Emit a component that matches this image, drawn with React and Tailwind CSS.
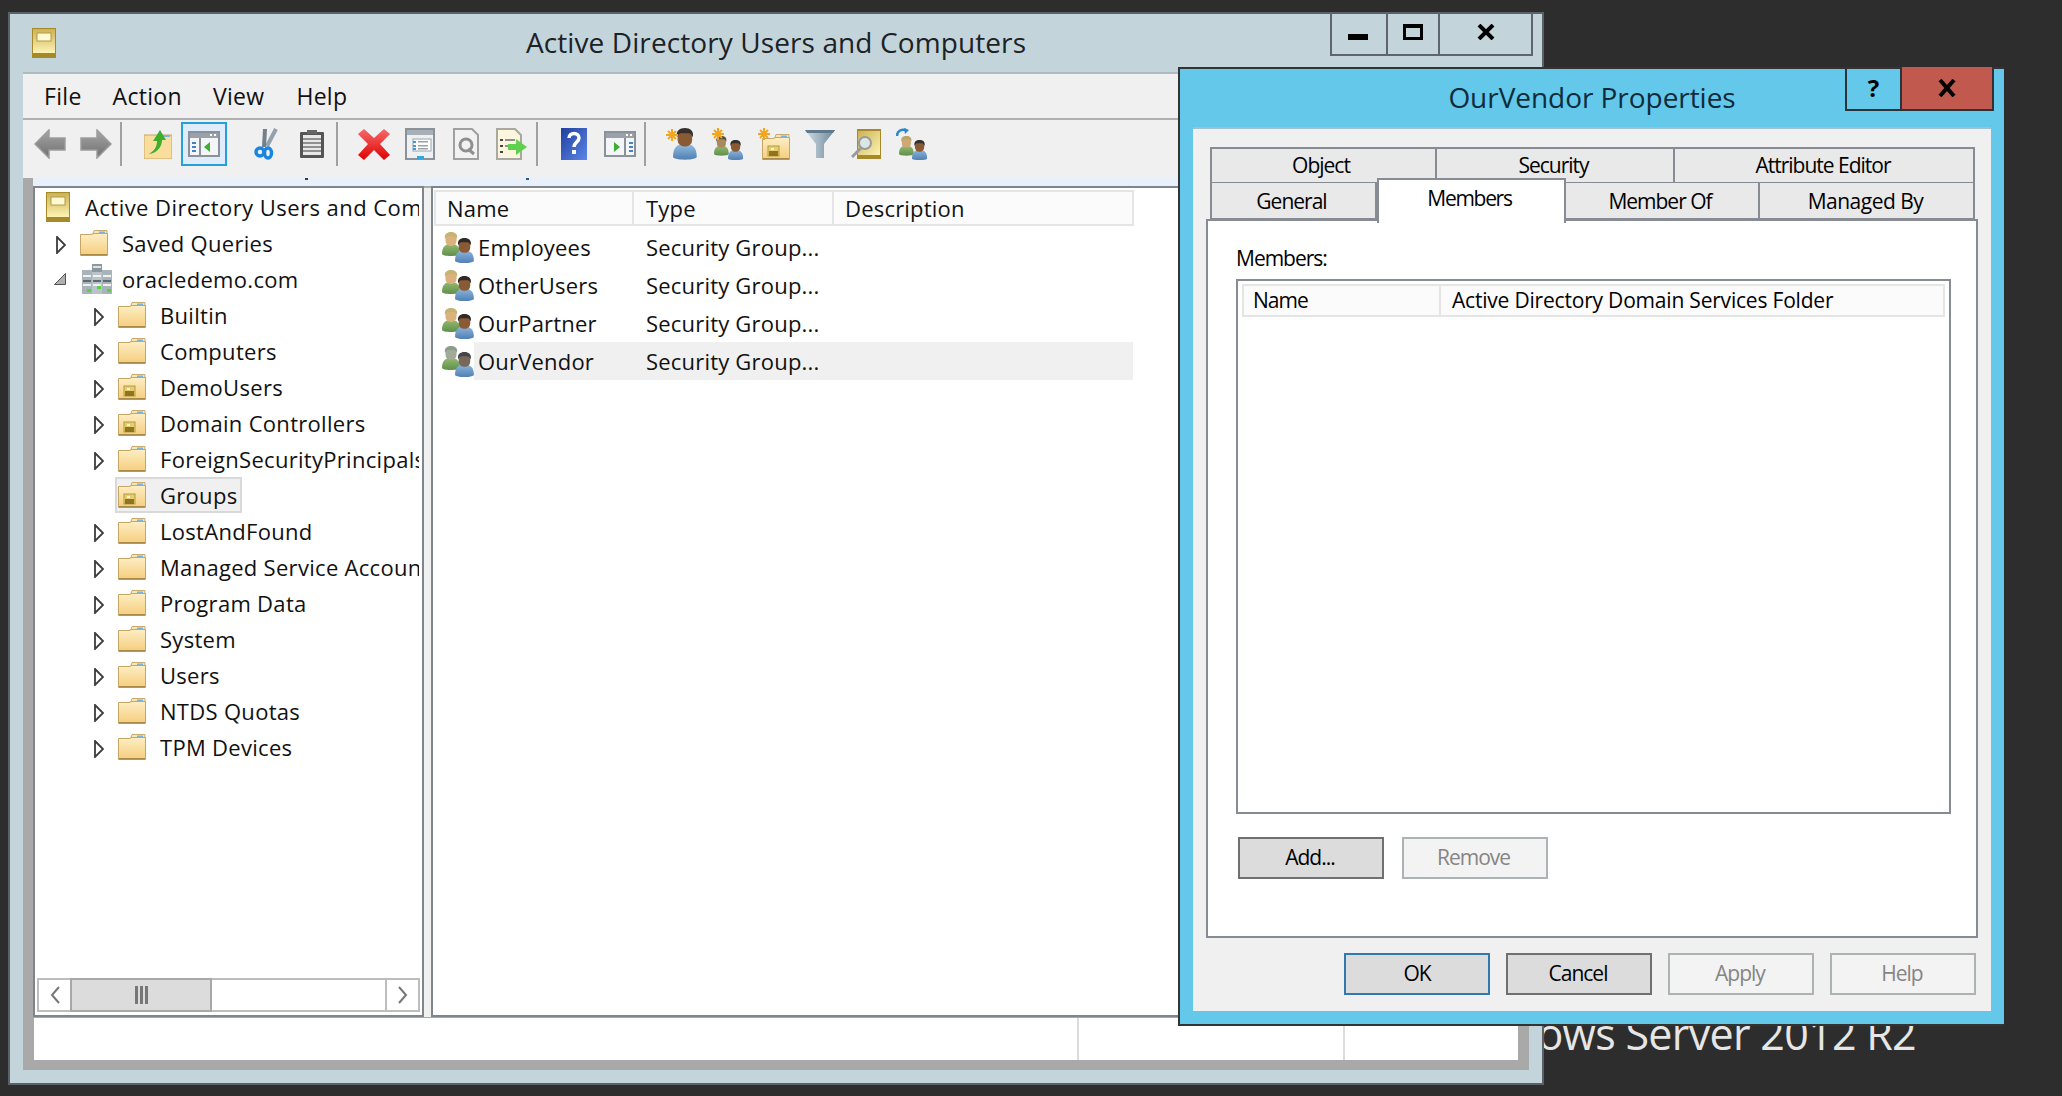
import React from "react";

const Grad = ({ id, c1, c2, x2 = 0, y2 = 1 }) => (
  <linearGradient id={id} x1="0" y1="0" x2={x2} y2={y2}>
    <stop offset="0" stopColor={c1} />
    <stop offset="1" stopColor={c2} />
  </linearGradient>
);

const Folder = ({ badge }) => (
  <svg width="28" height="26" viewBox="0 0 28 26" className="shrink-0 block">
    <defs><Grad id="fold" c1="#fdeec4" c2="#f5cd7c" /></defs>
    <path d="M14 .5h13v6H12z" fill="#f8e5b6" stroke="#c9ab6c" />
    <rect x="19" y="1.5" width="6" height="2" fill="#7cb3e0" />
    <path d="M.5 4.5H11l3-1H27.500V25.500H.5z" fill="url(#fold)" stroke="#c6a665" />
    <rect x="1" y="24" width="26" height="1.500" fill="#a98a48" />
    {badge && (
      <>
        <rect x="6" y="12" width="11" height="10" fill="#e8cd6e" stroke="#b39a42" />
        <rect x="7" y="17" width="9" height="5" fill="#8f7420" />
        <rect x="9" y="14" width="3" height="2" fill="#fff6c9" />
      </>
    )}
  </svg>
);

const SnapIn = () => (
  <svg width="24" height="30" viewBox="0 0 24 30" className="shrink-0 block">
    <defs><Grad id="snap" c1="#cbb255" c2="#fdf3b4" /></defs>
    <rect x="0" y="0" width="24" height="30" fill="#a8892a" />
    <rect x="1" y="1" width="22" height="24" fill="url(#snap)" />
    <rect x="1" y="25" width="22" height="4" fill="#a8892a" />
    <rect x="5" y="5" width="14" height="8" fill="#fff9d4" stroke="#b49a42" />
  </svg>
);

const Domain = () => (
  <svg width="30" height="30" viewBox="0 0 30 30" className="shrink-0 block">
    <rect x="10" y="0" width="10" height="26" fill="#8c98a0" />
    <rect x="0" y="6" width="10" height="24" fill="#a8b3ba" />
    <rect x="10" y="8" width="10" height="22" fill="#b9c3c9" />
    <rect x="20" y="6" width="10" height="24" fill="#a8b3ba" />
    {[0, 10, 20].map((x) => (
      <g key={x}>
        <rect x={x + 1} y="11" width="8" height="2" fill="#eef2f4" />
        <rect x={x + 1} y="16" width="8" height="2" fill="#5e6a72" />
        <rect x={x + 1} y="20" width="8" height="2" fill="#eef2f4" />
        <rect x={x + 5} y={x === 10 ? 22 : 25} width="4" height="3" fill="#57d43a" />
      </g>
    ))}
    <rect x="11" y="2" width="8" height="2" fill="#dde3e6" />
  </svg>
);

const Arrow = ({ open }) =>
  open ? (
    <svg width="12" height="12" viewBox="0 0 12 12" className="block">
      <path d="M11.500 .5v11H.5z" fill="#b0b0b0" stroke="#555" />
    </svg>
  ) : (
    <svg width="10" height="18" viewBox="0 0 10 18" className="block mt-[3px]">
      <path d="M1 1l8 8-8 8z" fill="#fff" stroke="#3c3c3c" strokeWidth="1.800" />
    </svg>
  );

const Person = ({ x = 0, y = 0, s = 1, body = "#7fa9d2", face = "#8a5a34", hair = "#35302c", id }) => (
  <g transform={`translate(${x} ${y}) scale(${s})`}>
    <defs><Grad id={id} c1={body} c2="#4f7fb2" /></defs>
    <path d="M0 22c0-7 3-10 9-10s9 3 9 10c0 1-4 2-9 2s-9-1-9-2z" fill={`url(#${id})`} />
    <rect x="3.500" y="1" width="11" height="13" rx="5" fill={face} />
    <path d="M3 7c-1-5 2-7 6-7s7 2 6 7c-1-2-2-3-3-3H6C5 4 4 5 3 7z" fill={hair} />
  </g>
);

const GreenPerson = ({ x, y, s, face, hair, id }) => (
  <g transform={`translate(${x} ${y}) scale(${s})`}>
    <defs><Grad id={id} c1="#93b96f" c2="#5f8f4b" /></defs>
    <path d="M0 22c0-7 3-10 9-10s9 3 9 10c0 1-4 2-9 2s-9-1-9-2z" fill={`url(#${id})`} />
    <rect x="3.500" y="1" width="11" height="13" rx="5" fill={face} />
    <path d="M3 7c-1-5 2-7 6-7s7 2 6 7c-1-2-2-3-3-3H6C5 4 4 5 3 7z" fill={hair} />
  </g>
);

const Group = ({ dim, size = 32 }) => (
  <svg width={size} height={size} viewBox="0 0 32 32" className="shrink-0 block">
    <GreenPerson x={0} y={1} s={1} face={dim ? "#a2aa98" : "#d9b27e"} hair={dim ? "#8d9c8d" : "#c8b272"} id={dim ? "gd" : "gb"} />
    <Person x={13} y={7} s={1.05} body="#8db5dc" face={dim ? "#77685a" : "#8a5a34"} hair={dim ? "#454545" : "#302a26"} id={dim ? "gf" : "gc"} />
  </svg>
);

const Burst = ({ x = 0, y = 0 }) => (
  <g transform={`translate(${x} ${y})`} stroke="#f4a51f" strokeWidth="2">
    <path d="M6 0v12M0 6h12M2 2l8 8M10 2l-8 8" />
  </g>
);

const Win = ({ right }) => (
  <svg width="32" height="26" viewBox="0 0 32 26" className="block">
    <rect x="1" y="1" width="30" height="24" fill="#f3f5f7" stroke="#8a9199" strokeWidth="2" />
    <rect x="2" y="2" width="28" height="5" fill="#9aa1a8" />
    <rect x="22" y="3" width="2" height="2" fill="#fff" />
    <rect x="26" y="3" width="2" height="2" fill="#fff" />
    <rect x={right ? 20 : 11} y="7" width="2" height="18" fill="#8a9199" />
    {right ? (
      <>
        <path d="M10 11l6 5-6 5z" fill="#3fae2c" />
        <rect x="25" y="11" width="4" height="2" fill="#4a7fc0" />
        <rect x="25" y="15" width="4" height="2" fill="#4a7fc0" />
        <rect x="25" y="19" width="4" height="2" fill="#4a7fc0" />
      </>
    ) : (
      <>
        <rect x="4" y="11" width="4" height="2" fill="#4a7fc0" />
        <rect x="4" y="15" width="4" height="2" fill="#4a7fc0" />
        <rect x="4" y="19" width="4" height="2" fill="#4a7fc0" />
        <path d="M22 11l-6 5 6 5z" fill="#3fae2c" />
      </>
    )}
  </svg>
);

const icons = {
  back: (
    <svg width="32" height="30" viewBox="0 0 32 30" className="block">
      <defs><Grad id="ar" c1="#a6a6a6" c2="#6f6f6f" /></defs>
      <path d="M1 15L15 1v8h16v12H15v8z" fill="url(#ar)" stroke="#9c9c9c" strokeWidth="1.500" />
    </svg>
  ),
  fwd: (
    <svg width="32" height="30" viewBox="0 0 32 30" className="block">
      <path d="M31 15L17 1v8H1v12h16v8z" fill="url(#ar)" stroke="#9c9c9c" strokeWidth="1.500" />
    </svg>
  ),
  up: (
    <svg width="28" height="30" viewBox="0 0 28 30" className="block">
      <path d="M0 6h28v24H0z" fill="#f9dd9c" stroke="#c6a665" />
      <path d="M18 6h8v2h-8z" fill="#7cb3e0" />
      <path d="M5 25c5-3 8-7 8-13H9l7-11 6 10h-4c0 7-5 13-13 14z" fill="#3fae2c" />
    </svg>
  ),
  win: <Win />,
  cut: (
    <svg width="24" height="32" viewBox="0 0 24 32" className="block">
      <path d="M13 18L22 1" stroke="#93a0ad" strokeWidth="4" />
      <path d="M10 19L11 1" stroke="#73808c" strokeWidth="4" />
      <circle cx="6" cy="24" r="4" fill="none" stroke="#1b86e0" strokeWidth="3.500" />
      <ellipse cx="14" cy="25" rx="3.500" ry="5" fill="none" stroke="#1b86e0" strokeWidth="3.500" />
    </svg>
  ),
  clip: (
    <svg width="24" height="28" viewBox="0 0 24 28" className="block">
      <rect x="0" y="2" width="24" height="26" rx="1" fill="#555" />
      <rect x="7" y="0" width="10" height="4" fill="#666" />
      <rect x="3" y="5" width="18" height="20" fill="#e8e8e8" />
      {[8, 12, 16, 20].map((y) => <rect key={y} x="3" y={y} width="18" height="2" fill="#8f8f8f" />)}
    </svg>
  ),
  del: (
    <svg width="32" height="31" viewBox="0 0 32 31" className="block">
      <defs><Grad id="rx" c1="#f76a6a" c2="#df0000" /></defs>
      <path d="M6 0l10 9L26 0l6 5-10 10 10 11-6 5-10-10L6 31l-6-5 10-11L0 5z" fill="url(#rx)" />
    </svg>
  ),
  prop: (
    <svg width="30" height="32" viewBox="0 0 30 32" className="block">
      <rect x="1" y="1" width="28" height="30" fill="#eef1f4" stroke="#8a9199" strokeWidth="2" />
      <rect x="2" y="2" width="26" height="5" fill="#a8afb6" />
      <rect x="8" y="11" width="18" height="12" fill="#fff" stroke="#9aa1a8" />
      {[13, 17, 20].map((y) => <rect key={y} x="8" y={y} width="3" height="2" fill="#3c9be0" />)}
      {[13, 17, 20].map((y) => <rect key={y} x="13" y={y} width="10" height="1.500" fill="#9aa1a8" />)}
      <rect x="12" y="28" width="7" height="3" fill="#2ea8e0" />
    </svg>
  ),
  refresh: (
    <svg width="26" height="32" viewBox="0 0 26 32" className="block">
      <path d="M1 1h18l6 6v24H1z" fill="#f2f2f2" stroke="#a0a0a0" strokeWidth="2" />
      <circle cx="13" cy="17" r="6" fill="none" stroke="#8f8f8f" strokeWidth="3" />
      <path d="M15 21l6 5" stroke="#8f8f8f" strokeWidth="3" />
    </svg>
  ),
  exp: (
    <svg width="32" height="32" viewBox="0 0 32 32" className="block">
      <path d="M1 1h18l6 6v24H1z" fill="#fbf6dd" stroke="#a9a9a0" strokeWidth="2" />
      {[11, 17, 23].map((y) => <rect key={y} x="4" y={y} width="3" height="2" fill="#444" />)}
      {[11, 17].map((y) => <rect key={y} x="9" y={y} width="10" height="2" fill="#8f8f8f" />)}
      <path d="M12 16h8v-5l11 8-11 8v-5h-8z" fill="#5fd14f" />
    </svg>
  ),
  help: (
    <svg width="26" height="32" viewBox="0 0 26 32" className="block">
      <defs><Grad id="hp" c1="#1f3f9f" c2="#5c86e8" x2="1" y2="1" /></defs>
      <rect width="26" height="32" fill="url(#hp)" />
      <path d="M8 10c0-6 10-6 10 0 0 4-5 4-5 9" fill="none" stroke="#fff" strokeWidth="3.500" />
      <rect x="11" y="22" width="4" height="4" fill="#fff" />
    </svg>
  ),
  det: <Win right />,
  user: (
    <svg width="32" height="32" viewBox="0 0 32 32" className="block">
      <Person x={7} y={0} s={1.320} body="#94bde2" id="us" />
      <Burst x={0} y={1} />
    </svg>
  ),
  group: (
    <svg width="32" height="32" viewBox="0 0 32 32" className="block">
      <GreenPerson x={2} y={8} s={0.82} face="#a98a5c" hair="#57503c" id="g2" />
      <Person x={16} y={12} s={0.84} body="#8db5dc" id="g3" />
      <Burst x={0} y={0} />
    </svg>
  ),
  ou: (
    <svg width="32" height="32" viewBox="0 0 32 32" className="block">
      <g transform="translate(4 6)"><Folder badge /></g>
      <Burst x={0} y={0} />
    </svg>
  ),
  filter: (
    <svg width="30" height="30" viewBox="0 0 30 30" className="block">
      <defs><Grad id="fl" c1="#cfdde6" c2="#6f8797" x2="1" y2="0" /></defs>
      <path d="M0 1h30L19 15v14h-8V15z" fill="url(#fl)" />
      <path d="M0 1h30l-2 3H2z" fill="#5f7a8c" />
    </svg>
  ),
  find: (
    <svg width="30" height="30" viewBox="0 0 30 30" className="block">
      <defs><Grad id="fd" c1="#cbb255" c2="#fdf3b4" x2="1" y2="1" /></defs>
      <rect x="6" y="0" width="24" height="30" fill="#a8892a" />
      <rect x="7" y="2" width="22" height="24" fill="url(#fd)" />
      <circle cx="14" cy="14" r="6" fill="#dbe7e4" stroke="#9a9a9a" strokeWidth="2" />
      <path d="M10 19L1 28" stroke="#9a9a9a" strokeWidth="3" />
    </svg>
  ),
  add: (
    <svg width="32" height="32" viewBox="0 0 32 32" className="block">
      <path d="M1 8c0-5 4-7 9-6" fill="none" stroke="#2c86d0" strokeWidth="2.500" />
      <path d="M8 0l5 2-4 4z" fill="#2c86d0" />
      <GreenPerson x={3} y={8} s={0.82} face="#cfa876" hair="#b9a566" id="g4" />
      <Person x={16} y={12} s={0.84} body="#8db5dc" id="g5" />
    </svg>
  ),
};

const ToolBtn = ({ k, active }) => (
  <div className={active ? "w-[46px] h-[44px] flex items-center justify-center border-2 border-[#26a0da] bg-[#e1ecfa]" : "w-[46px] h-[44px] flex items-center justify-center"}>
    {icons[k]}
  </div>
);
const ToolSep = () => (
  <div className="w-[16px] h-[44px] flex justify-start pl-[1px]"><div className="w-[2px] h-full bg-[#a0a0a0]" /></div>
);

const tree = [
  ["Builtin"],
  ["Computers"],
  ["DemoUsers", true],
  ["Domain Controllers", true],
  ["ForeignSecurityPrincipals"],
  ["Groups", true, true],
  ["LostAndFound"],
  ["Managed Service Accounts"],
  ["Program Data"],
  ["System"],
  ["Users"],
  ["NTDS Quotas"],
  ["TPM Devices"],
];

const Scroll = () => (
  <div className="mx-[2px] mb-[3px] h-[34px] flex border-2 border-[#bdbdbd] bg-white shrink-0">
    <div className="w-[31px] flex items-center justify-center">
      <svg width="10" height="18" viewBox="0 0 10 18"><path d="M9 1L2 9l7 8" fill="none" stroke="#777" strokeWidth="2" /></svg>
    </div>
    <div className="w-[142px] flex items-center justify-center gap-[2px] bg-[#dcdcdc] border-2 border-[#a8a8a8] -my-[2px]">
      <div className="w-[3px] h-[18px] bg-[#777]" /><div className="w-[3px] h-[18px] bg-[#777]" /><div className="w-[3px] h-[18px] bg-[#777]" />
    </div>
    <div className="flex-1" />
    <div className="w-[33px] flex items-center justify-center border-l-2 border-[#bdbdbd]">
      <svg width="10" height="18" viewBox="0 0 10 18"><path d="M1 1l7 8-7 8" fill="none" stroke="#777" strokeWidth="2" /></svg>
    </div>
  </div>
);

const rows = ["Employees", "OtherUsers", "OurPartner", "OurVendor"];

const Tab = ({ className, children }) => (
  <div className={`flex items-center justify-center bg-[#e9e9e9] border-2 border-[#878c94] text-[21px] text-black ${className}`}>{children}</div>
);

const Btn = ({ children, kind, w = "w-[146px]" }) => {
  const cls = kind === "off" ? "bg-[#f3f3f3] border-[#adb2b5] text-[#858585]" : kind === "def" ? "bg-[#dcdcdc] border-[#2f79b0] text-black" : "bg-[#dcdcdc] border-[#707070] text-black";
  return <div className={`${w} h-[42px] flex items-center justify-center border-2 text-[21px] tracking-[-1px] ${cls}`}>{children}</div>;
};

export default function App() {
  return (
    <div className="relative w-[2062px] h-[1096px] bg-[#2d2d2d] overflow-hidden font-['Open_Sans','Liberation_Sans',sans-serif] text-[#111]">
      <div className="absolute left-[1436px] top-[1004px] w-[480px] text-right text-[43px] leading-[60px] tracking-[-0.7px] text-[#e6e6e6] whitespace-nowrap">Windows Server 2012 R2</div>

      {/* main window */}
      <div className="absolute left-[8px] top-[12px] w-[1536px] h-[1073px] border-2 border-[#5a6169] bg-[#c3d5db] flex flex-col px-[13px] pb-[13px]">
        <div className="relative h-[59px] shrink-0 -mx-[13px] flex items-center justify-center pb-[3px]">
          <div className="absolute left-[22px] top-[14px]"><SnapIn /></div>
          <div className="text-[28px] text-[#1c2226] tracking-[0.1px]">Active Directory Users and Computers</div>
          <div className="absolute top-[-2px] right-[9px] flex h-[44px] border-2 border-t-0 border-[#5f6570]">
            <div className="w-[56px] border-r-2 border-[#5f6570] flex justify-center pt-[22px] pr-[2px]"><div className="w-[20px] h-[6px] bg-black" /></div>
            <div className="w-[52px] border-r-2 border-[#5f6570] flex justify-center pt-[12px]"><div className="w-[20px] h-[16px] border-[3px] border-t-4 border-black" /></div>
            <div className="w-[91px] flex justify-center pt-[12px]">
              <svg width="18" height="16" viewBox="0 0 18 16" className="block"><path d="M2 1l14 14M16 1L2 15" stroke="#000" strokeWidth="4" /></svg>
            </div>
          </div>
        </div>

        <div className="flex-1 min-h-0 flex flex-col border-t-2 border-[#aebcc2] -mt-[1px]">
          <div className="h-[44px] shrink-0 bg-[#f0f0f0] flex items-center text-[23px] tracking-[0.3px] text-[#111] border-b-2 border-[#b0b0b0] box-content">
            <span className="ml-[21px]">File</span>
            <span className="ml-[31px]">Action</span>
            <span className="ml-[31px]">View</span>
            <span className="ml-[32px]">Help</span>
          </div>
          <div className="h-[58px] shrink-0 bg-[#f0f0f0] flex items-start pt-[2px] pl-[4px]">
            <ToolBtn k="back" /><ToolBtn k="fwd" /><ToolSep />
            <ToolBtn k="up" /><ToolBtn k="win" active /><div className="w-[16px]" />
            <ToolBtn k="cut" /><ToolBtn k="clip" /><ToolSep />
            <ToolBtn k="del" /><ToolBtn k="prop" /><ToolBtn k="refresh" /><ToolBtn k="exp" /><ToolSep />
            <ToolBtn k="help" /><ToolBtn k="det" /><ToolSep />
            <ToolBtn k="user" /><ToolBtn k="group" /><ToolBtn k="ou" /><ToolBtn k="filter" /><ToolBtn k="find" /><ToolBtn k="add" />
          </div>

          <div className="flex-1 min-h-0 bg-[#a9a9a9] flex flex-col pl-[10px] pr-[11px] pb-[10px]">
            <div className="relative h-[8px] -mr-[11px] bg-[#e8f0fc] shrink-0">
              <div className="absolute left-[272px] top-0 w-[3px] h-[2px] bg-[#3a3a3a]" />
              <div className="absolute left-[493px] top-0 w-[3px] h-[2px] bg-[#2a5a8a]" />
            </div>
            <div className="flex-1 min-h-0 flex">
              {/* tree */}
              <div className="w-[391px] shrink-0 border-2 border-[#7f858c] bg-white flex flex-col text-[22px] tracking-[0.3px] overflow-hidden">
                <div className="flex-1 min-h-0 pt-[1px] whitespace-nowrap">
                  <div className="h-[36px] flex items-center pl-[11px] pr-[3px] overflow-hidden">
                    <SnapIn /><span className="ml-[15px] overflow-hidden tracking-[0.450px]">Active Directory Users and Computers</span>
                  </div>
                  <div className="h-[36px] flex items-center pl-[21px] pr-[3px] overflow-hidden">
                    <div className="w-[12px]"><Arrow /></div>
                    <div className="ml-[12px]"><Folder /></div>
                    <span className="ml-[14px]">Saved Queries</span>
                  </div>
                  <div className="h-[36px] flex items-center pl-[19px] pr-[3px] overflow-hidden">
                    <div className="w-[14px]"><Arrow open /></div>
                    <div className="ml-[14px]"><Domain /></div>
                    <span className="ml-[10px]">oracledemo.com</span>
                  </div>
                  {tree.map(([name, badge, sel]) =>
                    sel ? (
                      <div key={name} className="h-[36px] flex items-center">
                        <div className="ml-[80px] w-[127px] h-[36px] flex items-center pl-[1px] bg-[#f0f0f0] border-2 border-[#d9d9d9]">
                          <Folder badge={badge} /><span className="ml-[14px]">{name}</span>
                        </div>
                      </div>
                    ) : (
                      <div key={name} className="h-[36px] flex items-center pl-[59px] pr-[3px] overflow-hidden">
                        <div className="w-[12px] shrink-0"><Arrow /></div>
                        <div className="ml-[12px] shrink-0"><Folder badge={badge} /></div>
                        <span className="ml-[14px] overflow-hidden">{name}</span>
                      </div>
                    )
                  )}
                </div>
                <Scroll />
              </div>
              {/* splitter */}
              <div className="w-[7px] shrink-0 bg-[#f0f0f0] mt-[2px]" />
              {/* list */}
              <div className="flex-1 min-w-0 border-2 border-[#7f858c] bg-white text-[22px] tracking-[0.2px] whitespace-nowrap">
                <div className="flex h-[36px] mt-[2px] ml-[1px]">
                  <div className="w-[200px] border-2 border-[#e5e5e5] bg-[#fbfbfb] flex items-center pl-[11px]">Name</div>
                  <div className="w-[200px] border-2 border-l-0 border-[#e5e5e5] bg-[#fbfbfb] flex items-center pl-[12px]">Type</div>
                  <div className="w-[300px] border-2 border-l-0 border-[#e5e5e5] bg-[#fbfbfb] flex items-center pl-[11px]">Description</div>
                </div>
                <div className="mt-[2px]">
                  {rows.map((r, i) => (
                    <div key={r} className="h-[38px] flex items-center">
                      <div className="ml-[9px] w-[32px] shrink-0"><Group dim={i === 3} /></div>
                      <div className={i === 3 ? "w-[659px] h-[38px] flex items-center bg-[#f0f0f0]" : "w-[659px] h-[38px] flex items-center"}>
                        <span className="w-[172px] pl-[4px]">{r}</span>
                        <span>Security Group...</span>
                      </div>
                    </div>
                  ))}
                </div>
              </div>
            </div>
            <div className="h-[42px] mt-[1px] shrink-0 ml-[1px] bg-white flex">
              <div className="w-[1045px] border-r-2 border-[#dcdcdc]" />
              <div className="w-[266px] border-r-2 border-[#dcdcdc]" />
            </div>
          </div>
        </div>
      </div>

      {/* dialog */}
      <div className="absolute left-[1178px] top-[67px] w-[826px] h-[959px] border-2 border-r-0 border-[#333] bg-[#63c8ea] flex flex-col">
        <div className="relative h-[58px] shrink-0 flex items-center justify-center pb-[3px]">
          <div className="text-[28px] text-[#102c3a] tracking-[-0.05px]">OurVendor Properties</div>
          <div className="absolute top-[-2px] right-[10px] flex h-[44px] border-2 border-t-0 border-[#2c3338]">
            <div className="w-[55px] border-r-2 border-[#2c3338] flex items-center justify-center text-[24px] font-bold text-black">?</div>
            <div className="w-[90px] bg-[#c1594f] flex items-center justify-center">
              <svg width="18" height="18" viewBox="0 0 18 18" className="block"><path d="M2 1l14 16M16 1L2 17" stroke="#000" strokeWidth="4" /></svg>
            </div>
          </div>
        </div>
        <div className="flex-1 min-h-0 mx-[13px] mb-[13px] bg-[#f0f0f0] border-t-2 border-[#9fc0cf] pt-[18px] px-[13px]">
          <div className="ml-[4px] mr-[3px]">
            <div className="flex h-[37px]">
              <Tab className="w-[227px] tracking-[-1px] pr-[5px]">Object</Tab>
              <Tab className="w-[238px] border-l-0 tracking-[-1px] pr-[3px]">Security</Tab>
              <Tab className="w-[300px] border-l-0 tracking-[-1px] pr-[2px]">Attribute Editor</Tab>
            </div>
            <div className="flex h-[37px] -mt-[1px] relative">
              <Tab className="w-[167px] border-t-0 h-[37px] tracking-[-1px] pt-[2px] pr-[4px]">General</Tab>
              <div className="relative z-10 -mt-[5px] w-[189px] h-[45px] bg-white border-2 border-b-0 border-[#878c94] flex items-start justify-center pt-[3px] pr-[4px] text-[21px] tracking-[-1.300px] text-black">Members</div>
              <Tab className="w-[194px] border-t-0 border-l-0 h-[37px] tracking-[-1px] pt-[2px] pr-[4px]">Member Of</Tab>
              <Tab className="w-[215px] border-t-0 border-l-0 h-[37px] tracking-[-0.500px] pt-[2px] pr-[2px]">Managed By</Tab>
            </div>
          </div>
          <div className="-mt-[1px] h-[719px] w-[772px] bg-white border-2 border-[#878c94] pt-[22px] pl-[28px] pr-[25px]">
            <div className="h-[30px] mb-[6px] flex items-center text-[21px] tracking-[-1px] text-black leading-none">Members:</div>
            <div className="h-[535px] border-2 border-[#878c94] pt-[3px] px-[4px]">
              <div className="flex h-[33px] border-2 border-[#e5e5e5] bg-[#fbfbfb] text-[21px] text-black">
                <div className="w-[197px] border-r-2 border-[#e5e5e5] flex items-center pl-[9px] tracking-[-1px]">Name</div>
                <div className="flex-1 flex items-center pl-[11px] tracking-[-0.200px]">Active Directory Domain Services Folder</div>
              </div>
            </div>
            <div className="flex gap-[18px] mt-[23px] ml-[2px]">
              <Btn><span className="pr-[2px]">Add...</span></Btn>
              <Btn kind="off"><span className="pr-[3px]">Remove</span></Btn>
            </div>
          </div>
          <div className="flex justify-end gap-[16px] mt-[15px] pr-[2px]">
            <Btn kind="def">OK</Btn>
            <Btn><span className="pr-[2px]">Cancel</span></Btn>
            <Btn kind="off"><span className="pr-[2px]">Apply</span></Btn>
            <Btn kind="off"><span className="pr-[2px]">Help</span></Btn>
          </div>
        </div>
      </div>
    </div>
  );
}
